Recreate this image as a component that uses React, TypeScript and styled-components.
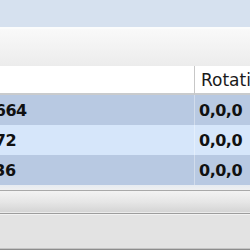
import React from "react";
import styled, { createGlobalStyle } from "styled-components";

const GlobalStyle = createGlobalStyle`
  html, body {
    margin: 0;
    padding: 0;
    width: 250px;
    height: 250px;
    overflow: hidden;
    background: #e3e3e3;
  }
`;

const FIRST_COL = 269;

const Window = styled.div`
  margin-left: -74px;
  width: 324px;
  height: 250px;
  display: flex;
  flex-direction: column;
  font-family: "DejaVu Sans", Tahoma, Verdana, sans-serif;
  color: #111;
`;

const TitleBand = styled.div`
  height: 27px;
  background: #d6e1ef;
`;

const Toolbar = styled.div`
  height: 37px;
  border-top: 2px solid #fbfcfc;
  background: linear-gradient(#f9f9f9, #f4f4f4 40%, #ececec);
`;

const Grid = styled.div`
  display: grid;
  grid-template-columns: ${FIRST_COL}px 1fr;
`;

const HeaderCell = styled.div<{ $last?: boolean }>`
  height: 27px;
  padding-left: ${(p) => (p.$last ? "6px" : "4px")};
  display: flex;
  align-items: center;
  background: #fff;
  font-size: 17px;
  color: #1a1a1a;
  border-bottom: 2px solid #c9cbcd;
  border-right: ${(p) => (p.$last ? "none" : "1px solid #c7c7c7")};
  box-shadow: ${(p) => (p.$last ? "inset 1px 0 0 #ffffff" : "none")};
  white-space: nowrap;
  overflow: hidden;
`;

const Cell = styled.div<{ $alt: boolean; $last?: boolean }>`
  height: 30px;
  padding-left: 4px;
  display: flex;
  align-items: center;
  background: ${(p) => (p.$alt ? "#d6e6fa" : "#b8c9e2")};
  font-size: 16px;
  font-weight: bold;
  letter-spacing: -0.5px;
  border-right: ${(p) => (p.$last ? "none" : "1px solid rgba(255,255,255,0.35)")};
  white-space: nowrap;
  overflow: hidden;
`;

const Gap = styled.div`
  height: 5px;
  background: linear-gradient(#e6ebf1, #eff0f1);
`;

const StatusStrip = styled.div`
  height: 22px;
  border-top: 1px solid #a9a9a9;
  border-bottom: 1px solid #9d9d9d;
  box-shadow: inset 0 -1px 0 #ebebeb;
  background: linear-gradient(#f3f3f3, #e6e6e6 50%, #d3d3d3);
`;

const Footer = styled.div`
  flex: 1;
  background: #e3e3e3;
  border-top: 1px solid #f2f2f2;
  border-bottom: 1px solid #8d8d8d;
  box-shadow: inset 0 -1px 0 #c4c4c4;
`;

const rows = [
  { pos: "0.5,1,0.664", rot: "0,0,0" },
  { pos: "0.5,1.0,72", rot: "0,0,0" },
  { pos: "125,0.336", rot: "0,0,0" },
];

export default function App() {
  return (
    <Window>
      <GlobalStyle />
      <TitleBand />
      <Toolbar />
      <Grid>
        <HeaderCell>Position</HeaderCell>
        <HeaderCell $last>Rotation</HeaderCell>
        {rows.map((r, i) => (
          <React.Fragment key={i}>
            <Cell $alt={i % 2 === 1}>{r.pos}</Cell>
            <Cell $alt={i % 2 === 1} $last>
              {r.rot}
            </Cell>
          </React.Fragment>
        ))}
      </Grid>
      <Gap />
      <StatusStrip />
      <Footer />
    </Window>
  );
}
